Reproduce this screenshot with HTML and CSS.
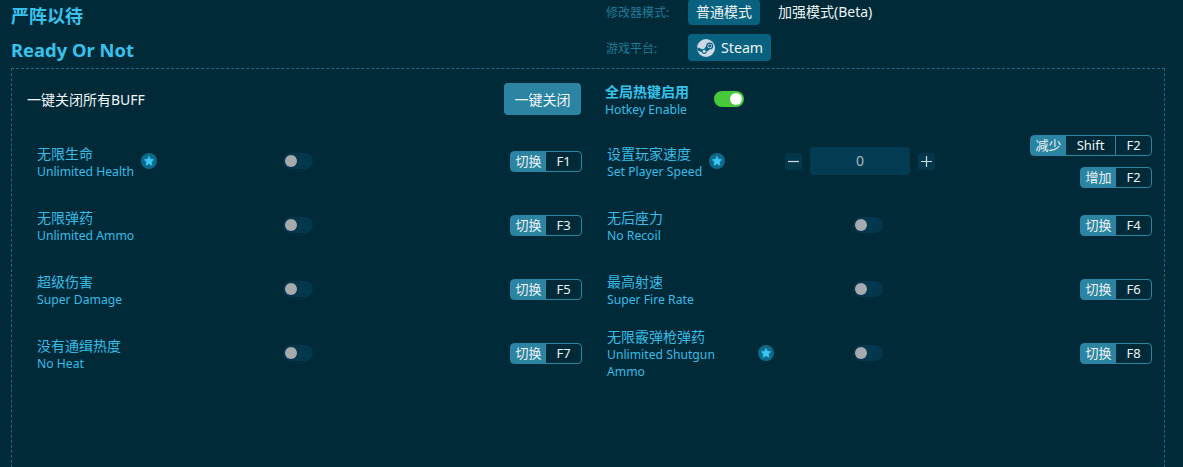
FILE: index.html
```html
<!DOCTYPE html>
<html lang="zh">
<head>
<meta charset="utf-8">
<title>严阵以待</title>
<link rel="stylesheet" href="styles.css">
</head>
<body>
<header class="head">
  <div class="titles">
    <h1>严阵以待</h1>
    <h2>Ready Or Not</h2>
  </div>
  <div class="modes">
    <div class="mode-row">
      <span class="mode-label">修改器模式:</span>
      <span class="pill active">普通模式</span>
      <span class="pill">加强模式(Beta)</span>
    </div>
    <div class="mode-row second">
      <span class="mode-label">游戏平台:</span>
      <span class="pill active steam">
        <svg class="steam-icon" viewBox="0 0 32 32"><circle cx="16" cy="16" r="16" fill="#cfd8e6"/><path d="M1 20.5l7.4 3.1a4.6 4.6 0 0 0 8.9-1.1l5.2-3.8a6.3 6.3 0 1 0-6.3-6.4l-3.6 5.3a4.5 4.5 0 0 0-3 .8L.3 14.6z" fill="#0a6683"/><circle cx="22.5" cy="12.4" r="3.9" fill="#cfd8e6"/><circle cx="22.5" cy="12.4" r="2.6" fill="#0a6683"/><circle cx="12.8" cy="21.8" r="2.7" fill="#cfd8e6"/></svg>
        Steam
      </span>
    </div>
  </div>
</header>

<main class="panel">
  <section class="grid">
    <div class="top-row">
      <span class="all-off">一键关闭所有BUFF</span>
      <button class="off-btn">一键关闭</button>
    </div>
    <div class="top-row hotkey">
      <div class="hk-text">
        <div class="hk-zh">全局热键启用</div>
        <div class="hk-en">Hotkey Enable</div>
      </div>
      <span class="switch on"></span>
    </div>

    <div class="row">
      <div class="name-cell">
        <div class="name"><div class="zh">无限生命</div><div class="en">Unlimited Health</div></div>
        <svg class="star" viewBox="0 0 16 16"><circle cx="8" cy="8" r="8" fill="#0c6a8a"/><path d="M8 3.4l1.4 2.95 3.2.42-2.35 2.2.62 3.18L8 10.55l-2.87 1.6.62-3.18L3.4 6.77l3.2-.42z" fill="#3cc6f5" stroke="#3cc6f5" stroke-width=".8" stroke-linejoin="round"/></svg>
      </div>
      <span class="switch"></span>
      <div class="keys"><div class="key"><span class="k-label">切换</span><span class="k-cap">F1</span></div></div>
    </div>

    <div class="row">
      <div class="name-cell short">
        <div class="name"><div class="zh">设置玩家速度</div><div class="en">Set Player Speed</div></div>
        <svg class="star" viewBox="0 0 16 16"><circle cx="8" cy="8" r="8" fill="#0c6a8a"/><path d="M8 3.4l1.4 2.95 3.2.42-2.35 2.2.62 3.18L8 10.55l-2.87 1.6.62-3.18L3.4 6.77l3.2-.42z" fill="#3cc6f5" stroke="#3cc6f5" stroke-width=".8" stroke-linejoin="round"/></svg>
      </div>
      <div class="stepper">
        <span class="step"><svg viewBox="0 0 17 17"><path d="M3 8.5h11" stroke="#cfdbe0" stroke-width="1.2"/></svg></span>
        <span class="value">0</span>
        <span class="step"><svg viewBox="0 0 17 17"><path d="M3 8.5h11M8.5 3v11" stroke="#cfdbe0" stroke-width="1.2"/></svg></span>
      </div>
      <div class="keys stack">
        <div class="key"><span class="k-label">减少</span><span class="k-cap wide">Shift</span><span class="k-cap sep">F2</span></div>
        <div class="key"><span class="k-label">增加</span><span class="k-cap">F2</span></div>
      </div>
    </div>

    <div class="row">
      <div class="name-cell"><div class="name"><div class="zh">无限弹药</div><div class="en">Unlimited Ammo</div></div></div>
      <span class="switch"></span>
      <div class="keys"><div class="key"><span class="k-label">切换</span><span class="k-cap">F3</span></div></div>
    </div>

    <div class="row">
      <div class="name-cell"><div class="name"><div class="zh">无后座力</div><div class="en">No Recoil</div></div></div>
      <span class="switch"></span>
      <div class="keys"><div class="key"><span class="k-label">切换</span><span class="k-cap">F4</span></div></div>
    </div>

    <div class="row">
      <div class="name-cell"><div class="name"><div class="zh">超级伤害</div><div class="en">Super Damage</div></div></div>
      <span class="switch"></span>
      <div class="keys"><div class="key"><span class="k-label">切换</span><span class="k-cap">F5</span></div></div>
    </div>

    <div class="row">
      <div class="name-cell"><div class="name"><div class="zh">最高射速</div><div class="en">Super Fire Rate</div></div></div>
      <span class="switch"></span>
      <div class="keys"><div class="key"><span class="k-label">切换</span><span class="k-cap">F6</span></div></div>
    </div>

    <div class="row">
      <div class="name-cell"><div class="name"><div class="zh">没有通缉热度</div><div class="en">No Heat</div></div></div>
      <span class="switch"></span>
      <div class="keys"><div class="key"><span class="k-label">切换</span><span class="k-cap">F7</span></div></div>
    </div>

    <div class="row">
      <div class="name-cell">
        <div class="name narrow"><div class="zh">无限霰弹枪弹药</div><div class="en">Unlimited Shutgun Ammo</div></div>
        <svg class="star" viewBox="0 0 16 16"><circle cx="8" cy="8" r="8" fill="#0c6a8a"/><path d="M8 3.4l1.4 2.95 3.2.42-2.35 2.2.62 3.18L8 10.55l-2.87 1.6.62-3.18L3.4 6.77l3.2-.42z" fill="#3cc6f5" stroke="#3cc6f5" stroke-width=".8" stroke-linejoin="round"/></svg>
      </div>
      <span class="switch"></span>
      <div class="keys"><div class="key"><span class="k-label">切换</span><span class="k-cap">F8</span></div></div>
    </div>
  </section>
</main>
</body>
</html>
```
FILE: styles.css
```css
* { box-sizing: border-box; }
html, body { height: 100%; }
body {
  margin: 0;
  height: 467px;
  overflow: hidden;
  background: #002a38;
  font-family: "Noto Sans", "Noto Sans CJK SC", sans-serif;
  color: #fff;
}
.head {
  display: flex;
  height: 68px;
  padding-left: 11px;
}
.titles { width: 595px; }
h1, h2 { margin: 0; font-size: 18px; font-weight: 700; color: #38c2ec; line-height: 24px; }
h1 { margin-top: 4px; }
h2 { margin-top: 10px; font-size: 18.4px; }
.modes { display: flex; flex-direction: column; }
.mode-row { display: flex; align-items: center; height: 26px; margin-top: -1px; }
.mode-row.second { margin-top: 9px; height: 27px; }
.mode-label { width: 82px; font-size: 12px; color: #207a96; }
.pill {
  display: flex;
  align-items: center;
  height: 100%;
  padding: 0 8px 2px;
  margin-right: 10px;
  font-size: 14px;
  border-radius: 4px;
  color: #eef3f5;
}
.pill.active { background: #08627f; }
.steam { font-size: 14.2px; gap: 6px; padding: 0 8px 0 9px; }
.steam-icon { width: 18px; height: 18px; }
.panel {
  margin: 0 18px 0 11px;
  height: 420px;
  border: 1px dashed #136f8c;
  padding: 14px 12px 0 15px;
}
.grid {
  display: grid;
  grid-template-columns: 555px 555px;
  grid-template-rows: 46px;
  grid-auto-rows: 64px;
  column-gap: 15px;
}
.grid > .top-row { height: 32px; margin-bottom: 14px; }
.top-row { display: flex; align-items: center; }
.all-off { flex: 1; font-size: 14px; color: #f2f6f8; }
.off-btn {
  width: 77px;
  height: 32px;
  margin-right: 1px;
  border: 0;
  border-radius: 4px;
  background: #2a84a2;
  color: #f2f6f8;
  font: inherit;
  font-size: 14px;
}
.hotkey { padding-left: 8px; gap: 25px; }
.hk-text { padding-top: 3px; }
.hk-zh { font-size: 14px; font-weight: 700; color: #38c2ec; line-height: 18px; }
.hk-en { font-size: 12.2px; color: #38bce6; line-height: 17px; }
.row { display: flex; align-items: center; }
.name-cell { display: flex; align-items: center; gap: 7px; width: 256px; padding-left: 10px; }
.name-cell.short { width: 188px; }
.name { padding-top: 2px; }
.name.narrow { width: 144px; }
.zh { font-size: 14px; line-height: 18px; color: #38bce6; }
.en { font-size: 12.2px; line-height: 17px; color: #38bce6; }
.star { flex: none; width: 16px; height: 16px; }
.switch {
  position: relative;
  flex: none;
  width: 30px;
  height: 16px;
  border-radius: 8px;
  background: #03384c;
}
.switch::after {
  content: "";
  position: absolute;
  left: 2px;
  top: 2px;
  width: 12px;
  height: 12px;
  border-radius: 50%;
  background: #a6a9ad;
}
.switch.on { background: #47c93a; }
.switch.on::after { left: 16px; background: #fff; }
.stepper { display: flex; align-items: center; }
.step { display: flex; width: 17px; height: 17px; border-radius: 3px; background: #03384c; }
.step svg { width: 17px; height: 17px; }
.value {
  width: 100px;
  height: 28px;
  margin: 0 8px;
  border-radius: 4px;
  background: #033c52;
  color: #a9b6bc;
  font-size: 14px;
  line-height: 28px;
  text-align: center;
}
.keys { margin-left: auto; display: flex; flex-direction: column; align-items: flex-end; gap: 11px; }
.key {
  display: flex;
  height: 21px;
  border: 1px solid #2a84a2;
  border-radius: 4px;
  font-size: 13px;
  line-height: 19px;
  color: #eef3f5;
}
.k-label { width: 35px; background: #2a84a2; text-align: center; }
.k-cap { width: 35px; text-align: center; }
.k-cap.wide { width: 49px; }
.k-cap.sep { width: 36px; border-left: 1px solid #2a84a2; }
```
